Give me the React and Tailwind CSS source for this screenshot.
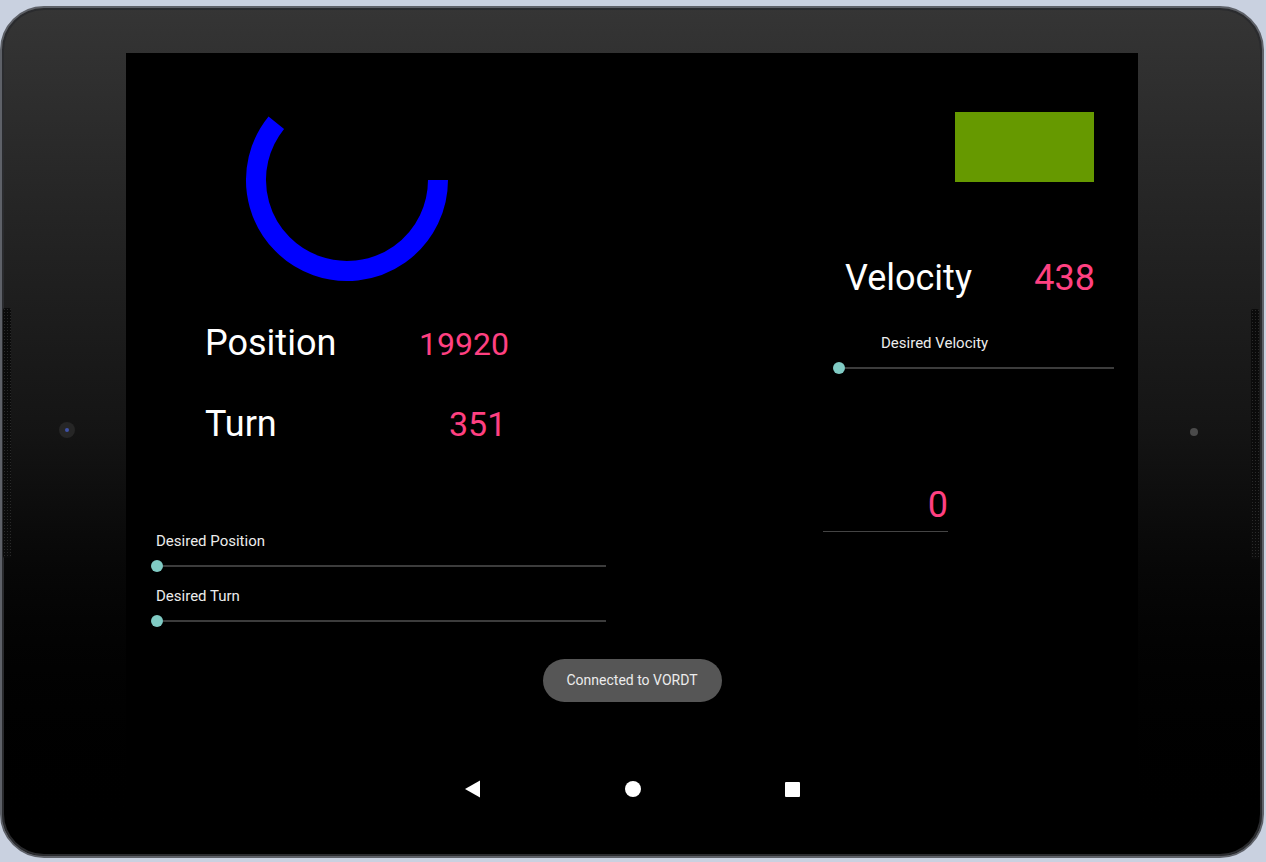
const Slider = ({ width }) => (
  <div className="flex items-center h-[12px]" style={{ width }}>
    <div className="w-[12px] h-[12px] rounded-full bg-[#80cbc4] shrink-0" />
    <div className="flex-1 h-[2px] bg-[#3c3c3c]" />
  </div>
);

const Arc = () => (
  <svg width="204" height="204" viewBox="0 0 204 204" className="block ml-[119px] mt-[25px]">
    <path
      d="M 193 102 A 91 91 0 1 1 31.3 44.7"
      fill="none"
      stroke="#0000ff"
      strokeWidth="20"
      strokeLinecap="butt"
    />
  </svg>
);

const LeftColumn = () => (
  <div className="w-[500px] flex flex-col">
    <Arc />
    {/* Position / Turn readouts */}
    <div className="flex items-baseline mt-[41px] ml-[79px] h-[40px] leading-[40px]">
      <span className="w-[214px] text-[36px] text-white">Position</span>
      <span className="text-[32px] text-[#ff4081]">19920</span>
    </div>
    <div className="flex items-baseline mt-[41px] ml-[79px] h-[40px] leading-[40px]">
      <span className="w-[244px] text-[36px] text-white">Turn</span>
      <span className="text-[34px] text-[#ff4081]">351</span>
    </div>

    {/* Desired sliders */}
    <div className="mt-[87px] ml-[30px] text-[15px] leading-[20px] text-[#ececec]">Desired Position</div>
    <div className="mt-[9px] ml-[25px]">
      <Slider width={455} />
    </div>
    <div className="mt-[14px] ml-[30px] text-[15px] leading-[20px] text-[#ececec]">Desired Turn</div>
    <div className="mt-[9px] ml-[25px]">
      <Slider width={455} />
    </div>
  </div>
);

const RightColumn = () => (
  <div className="ml-[197px] w-[300px] flex flex-col">
    <div className="ml-[132px] mt-[59px] w-[139px] h-[70px] bg-[#669900]" />
    <div className="flex items-baseline justify-between mt-[76px] ml-[22px] w-[250px] h-[40px] leading-[40px] text-[36px]">
      <span className="text-white">Velocity</span>
      <span className="text-[#ff4081]">438</span>
    </div>
    <div className="mt-[35px] ml-[58px] text-[15px] leading-[20px] text-[#ececec]">Desired Velocity</div>
    <div className="mt-[9px] ml-[10px]">
      <Slider width={281} />
    </div>
    <div className="mt-[111px] w-[125px] h-[47px] border-b border-[#444] text-right text-[36px] leading-[40px] text-[#ff4081]">
      0
    </div>
  </div>
);

const NavBar = () => (
  <div className="mt-[63px] flex justify-center gap-[112px] h-[48px] pl-[1px]">
    <div className="w-[48px] h-[48px] flex items-center justify-center">
      <svg width="18" height="18" viewBox="0 0 18 18">
        <path d="M 16 0.5 L 16 17.5 L 1 9 Z" fill="#fff" />
      </svg>
    </div>
    <div className="w-[48px] h-[48px] flex items-center justify-center">
      <div className="w-[16px] h-[16px] rounded-full bg-white" />
    </div>
    <div className="w-[48px] h-[48px] flex items-center justify-center">
      <div className="w-[15px] h-[15px] rounded-[1px] bg-white" />
    </div>
  </div>
);

const Screen = () => (
  <div className="w-[1012px] h-[772px] bg-black flex flex-col font-['Roboto',sans-serif]">
    <div className="flex">
      <LeftColumn />
      <RightColumn />
    </div>
    <div className="mt-[32px] mx-auto w-[179px] h-[43px] rounded-full bg-[#565656] flex items-center justify-center text-[14px] text-[#ececec]">
      Connected to VORDT
    </div>
    <NavBar />
  </div>
);

export default function App() {
  return (
    <div className="w-[1266px] h-[862px] bg-[#c9d1e0] overflow-hidden">
      <div className="relative mt-[6px] w-[1264px] h-[852px] rounded-[44px] border-2 border-[#5e6168] bg-gradient-to-b from-[#353535] via-[#141414] to-black pl-[124px] pt-[45px] shadow-[inset_0_0_0_2px_#2a2b2e]">
        {/* speaker grills and sensors on the bezel */}
        <div className="absolute left-[1px] top-[300px] w-[8px] h-[250px] rounded-[2px] bg-[#0b0b0b] bg-[radial-gradient(circle,#2a2a2a_1px,transparent_1px)] bg-[length:3px_3px]" />
        <div className="absolute right-[3px] top-[301px] w-[8px] h-[250px] rounded-[2px] bg-[#0b0b0b] bg-[radial-gradient(circle,#2a2a2a_1px,transparent_1px)] bg-[length:3px_3px]" />
        <div className="absolute left-[57px] top-[414px] w-[16px] h-[16px] rounded-full bg-[#262626] flex items-center justify-center">
          <div className="w-[4px] h-[4px] rounded-full bg-[#3f52a8]" />
        </div>
        <div className="absolute left-[1188px] top-[420px] w-[8px] h-[8px] rounded-full bg-[#4a4a4a]" />
        <Screen />
      </div>
    </div>
  );
}
